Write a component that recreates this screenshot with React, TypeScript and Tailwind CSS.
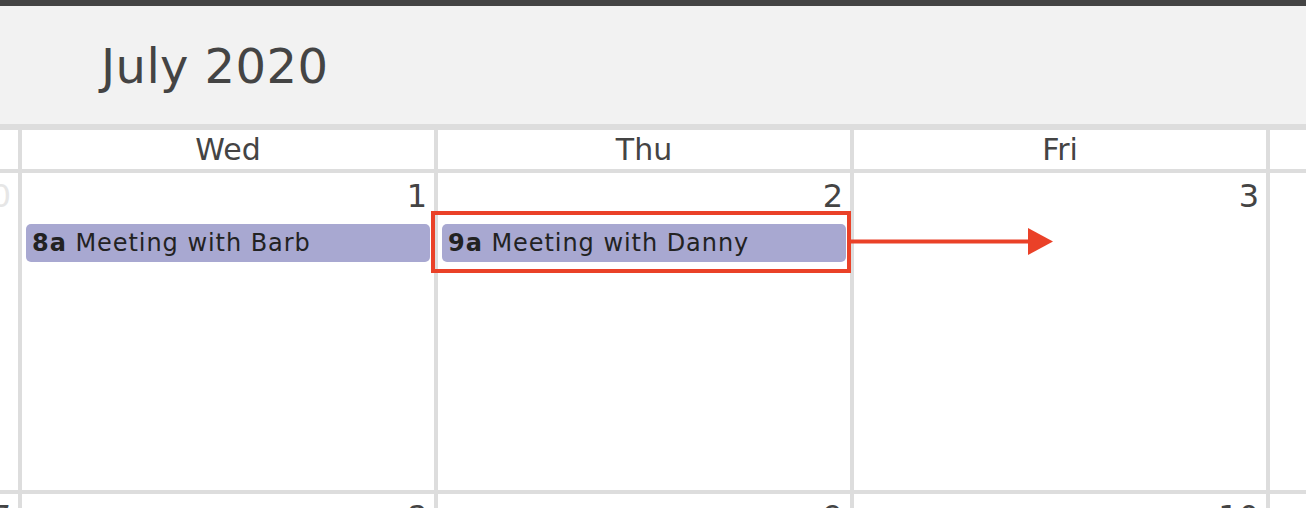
import React from "react";

const font = { fontFamily: '"DejaVu Sans", "Liberation Sans", sans-serif' };

type Cell = {
  day: string;
  faded?: boolean;
  event?: { time: string; title: string };
};

const weekOne: Cell[] = [
  { day: "30", faded: true },
  { day: "1", event: { time: "8a", title: "Meeting with Barb" } },
  { day: "2", event: { time: "9a", title: "Meeting with Danny" } },
  { day: "3" },
  { day: "4" },
];

const weekTwo: Cell[] = [
  { day: "7" },
  { day: "8" },
  { day: "9" },
  { day: "10" },
  { day: "11" },
];

const heads = ["Tue", "Wed", "Thu", "Fri", "Sat"];

function DayCell({ cell }: { cell: Cell }) {
  return (
    <div className="bg-white">
      <div
        className={`flex justify-end pr-[7px] pt-[3px] text-[32px] leading-[40px] whitespace-nowrap ${
          cell.faded ? "text-[#e6e6e6]" : "text-[#444]"
        }`}
      >
        {cell.day}
      </div>
      {cell.event && (
        <div className="mx-[4px] mt-[8px] h-[38px] rounded-[5px] bg-[#a8a8d1] pl-[6px] flex items-center text-[24px] tracking-[0.95px] text-[#222] whitespace-nowrap">
          <span className="font-bold">{cell.event.time}</span>
          <span>&nbsp;{cell.event.title}</span>
        </div>
      )}
    </div>
  );
}

export default function App() {
  return (
    <div className="w-[1306px] h-[508px] overflow-hidden bg-white relative" style={font}>
      <div className="h-[6px] bg-[#444]" />
      <div className="h-[118px] bg-[#f2f2f2] pl-[101px] pt-[30px]">
        <h1 className="text-[48px] leading-[60px] tracking-[0.4px] text-[#444]">July 2020</h1>
      </div>
      <div className="bg-[#dddddd] pt-[6px]">
        <div className="ml-[-394px] w-[2076px] grid grid-cols-[412px_412px_412px_412px_412px] grid-rows-[39px_317px_100px] gap-x-[4px] gap-y-[4px]">
          {heads.map((h) => (
            <div key={h} className="bg-white flex items-center justify-center text-[30px] text-[#444] whitespace-nowrap">
              {h}
            </div>
          ))}
          {weekOne.map((c) => (
            <DayCell key={c.day} cell={c} />
          ))}
          {weekTwo.map((c) => (
            <DayCell key={c.day} cell={c} />
          ))}
        </div>
      </div>
      <div className="absolute left-[431px] top-[211px] w-[420px] h-[62px] border-[4px] border-[#ea4128]" />
      <svg className="absolute left-[851px] top-[228px]" width="204" height="28" viewBox="0 0 204 28">
        <rect x="0" y="11.5" width="180" height="4" fill="#ea4128" />
        <polygon points="177,0 202,13.5 177,27" fill="#ea4128" />
      </svg>
    </div>
  );
}
